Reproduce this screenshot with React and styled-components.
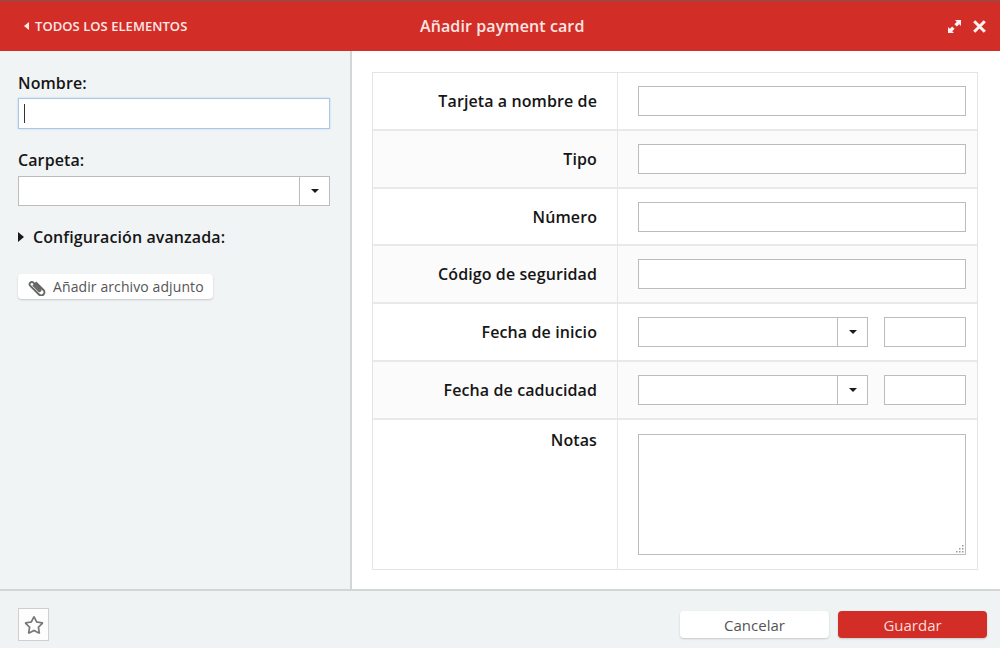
import React from 'react'
import styled, { createGlobalStyle } from 'styled-components'
import { FaRegStar } from 'react-icons/fa'

const Global = createGlobalStyle`
  html, body { margin: 0; padding: 0; height: 100%; }
  body { font-family: "Open Sans", "Liberation Sans", sans-serif; background: #fff; }
  * { box-sizing: border-box; }
`

const Page = styled.div`
  width: 1000px;
  height: 648px;
  display: flex;
  flex-direction: column;
  overflow: hidden;
`

const Header = styled.header`
  height: 51px;
  flex: none;
  display: grid;
  grid-template-columns: 396px auto 1fr;
  align-items: center;
  background: #d32d27;
  border-top: 2px solid #a8423c;
  color: #fff;
  padding: 0 14px 1px 24px;
`

const BackLink = styled.div`
  display: flex;
  align-items: center;
  gap: 6px;
  font-size: 13px;
  font-weight: 600;
  letter-spacing: 0.05px;
  color: #fde9e6;
`

const LeftCaret = styled.span`
  width: 0;
  height: 0;
  border-top: 4px solid transparent;
  border-bottom: 4px solid transparent;
  border-right: 5px solid #fde9e6;
`

const Title = styled.h1`
  margin: 0;
  font-size: 16px;
  font-weight: 600;
  letter-spacing: 0.1px;
  color: #fbe6e3;
`

const HeaderIcons = styled.div`
  display: flex;
  justify-content: flex-end;
  align-items: center;
  gap: 12px;
`

const Body = styled.div`
  flex: 1;
  display: flex;
  min-height: 0;
`

const Sidebar = styled.aside`
  width: 352px;
  flex: none;
  background: #f1f4f5;
  border-right: 2px solid #d3d6d7;
  padding: 21px 20px 0 18px;
`

const FieldLabel = styled.div`
  font-size: 16px;
  font-weight: 600;
  line-height: 22px;
  letter-spacing: 0.1px;
  color: #161616;
  margin-bottom: ${p => p.$gap}px;
`

const FocusedInput = styled.div`
  height: 31px;
  background: #fff;
  border: 1px solid #a9c8e8;
  box-shadow: 0 0 2px #bcd6f0;
  margin-bottom: 20px;
  padding: 5px 0 0 5px;
`

const Cursor = styled.div`
  width: 1px;
  height: 19px;
  background: #333;
`

const ComboBox = styled.div`
  display: flex;
  height: 30px;
  width: ${p => p.$width || '100%'};
  background: #fff;
  border: 1px solid #bcbcbc;
`

const ComboField = styled.div`
  flex: 1;
`

const ComboButton = styled.div`
  width: 30px;
  flex: none;
  display: flex;
  align-items: center;
  justify-content: center;
  border-left: 1px solid #bcbcbc;
`

const DownCaret = styled.span`
  width: 0;
  height: 0;
  border-left: 4px solid transparent;
  border-right: 4px solid transparent;
  border-top: 4px solid #1a1a1a;
`

const Advanced = styled.div`
  display: flex;
  align-items: center;
  gap: 9px;
  margin-top: 20px;
  font-size: 16px;
  font-weight: 600;
  line-height: 22px;
  letter-spacing: 0.1px;
  color: #161616;
`

const RightCaret = styled.span`
  width: 0;
  height: 0;
  border-top: 5px solid transparent;
  border-bottom: 5px solid transparent;
  border-left: 6px solid #1a1a1a;
`

const AttachButton = styled.button`
  display: flex;
  align-items: center;
  gap: 7px;
  height: 25px;
  margin-top: 26px;
  padding: 0 9px 0 10px;
  border: 0;
  border-radius: 4px;
  background: #fff;
  box-shadow: 0 1px 2px rgba(0, 0, 0, 0.18);
  font: 400 14px "Open Sans", sans-serif;
  letter-spacing: 0.1px;
  color: #555;
`

const Main = styled.main`
  flex: 1;
  background: #fff;
  padding: 21px 22px 0 20px;
`

const Table = styled.div`
  border: 1px solid #e4e4e4;
  height: 498px;
  display: flex;
  flex-direction: column;
`

const Row = styled.div`
  display: grid;
  grid-template-columns: 245px 1fr;
  height: ${p => p.$height}px;
  flex: ${p => (p.$grow ? 1 : 'none')};
  background: ${p => (p.$shaded ? '#fbfbfb' : '#fff')};

  & + & {
    border-top: 2px solid #e9e9e9;
  }
`

const RowLabel = styled.div`
  display: flex;
  justify-content: flex-end;
  align-items: ${p => (p.$top ? 'flex-start' : 'center')};
  padding: ${p => (p.$top ? '9px' : '0')} 20px 0 0;
  border-right: 1px solid #e6e6e6;
  font-size: 16px;
  font-weight: 600;
  letter-spacing: 0.1px;
  color: #161616;
`

const RowField = styled.div`
  display: flex;
  align-items: ${p => (p.$top ? 'flex-start' : 'center')};
  justify-content: space-between;
  padding: ${p => (p.$top ? '14px' : '0')} 11px 0 20px;
`

const TextInput = styled.div`
  height: 30px;
  width: ${p => p.$width || '100%'};
  background: #fff;
  border: 1px solid #bcbcbc;
`

const TextArea = styled.div`
  position: relative;
  width: 100%;
  height: 121px;
  background: #fff;
  border: 1px solid #bcbcbc;
`

const Grip = styled.svg`
  position: absolute;
  right: 1px;
  bottom: 1px;
`

const Footer = styled.footer`
  height: 59px;
  flex: none;
  display: flex;
  align-items: center;
  background: #f0f3f4;
  border-top: 2px solid #d3d6d7;
  padding: 10px 13px 0 18px;
`

const StarButton = styled.div`
  width: 31px;
  height: 33px;
  display: flex;
  align-items: center;
  justify-content: center;
  background: #fdfdfd;
  border: 1px solid #cfcfcf;
  color: #777;
  font-size: 20px;
`

const FooterButton = styled.button`
  width: 149px;
  height: 27px;
  margin-left: ${p => (p.$auto ? 'auto' : '9px')};
  border: 0;
  border-radius: 4px;
  font: 400 15px "Open Sans", sans-serif;
  background: ${p => (p.$primary ? '#d32d27' : '#fff')};
  color: ${p => (p.$primary ? '#fbdcd8' : '#555')};
  box-shadow: 0 1px 2px rgba(0, 0, 0, 0.18);
`

function ExpandIcon() {
  return (
    <svg width="13" height="13" viewBox="0 0 13 13" fill="#fdf1ef">
      <path d="M7 0h6v6l-1.8-1.8-2.4 2.4-2.4-2.4 2.4-2.4z" />
      <path d="M6 13H0V7l1.8 1.8 2.4-2.4 2.4 2.4-2.4 2.4z" />
    </svg>
  )
}

function CloseIcon() {
  return (
    <svg width="13" height="13" viewBox="0 0 13 13" stroke="#fdf1ef" strokeWidth="3" fill="none">
      <path d="M1.2 1.2l10.6 10.6M11.8 1.2L1.2 11.8" />
    </svg>
  )
}

// clip lies from top left to bottom right
function ClipIcon() {
  return (
    <svg width="18" height="18" viewBox="0 0 18 18" fill="none" stroke="#666" strokeWidth="1.9" strokeLinecap="round">
      <g transform="rotate(45 9 9)">
        <path d="M5.5 10.5V6.5h10.2a2.6 2.6 0 0 1 0 6.4H3.4a2.2 2.2 0 0 1 0-4.4h9.6a1 1 0 0 1 0 2H6" />
      </g>
    </svg>
  )
}

function Combo({ width }) {
  return (
    <ComboBox $width={width}>
      <ComboField />
      <ComboButton><DownCaret /></ComboButton>
    </ComboBox>
  )
}

const textRows = [
  { label: 'Tarjeta a nombre de', height: 56 },
  { label: 'Tipo', height: 58, shaded: true },
  { label: 'Número', height: 57 },
  { label: 'Código de seguridad', height: 58, shaded: true },
]

const dateRows = [
  { label: 'Fecha de inicio', height: 58 },
  { label: 'Fecha de caducidad', height: 58, shaded: true },
]

export default function App() {
  return (
    <Page>
      <Global />
      <Header>
        <BackLink><LeftCaret />TODOS LOS ELEMENTOS</BackLink>
        <Title>Añadir payment card</Title>
        <HeaderIcons><ExpandIcon /><CloseIcon /></HeaderIcons>
      </Header>
      <Body>
        <Sidebar>
          <FieldLabel $gap={4}>Nombre:</FieldLabel>
          <FocusedInput><Cursor /></FocusedInput>
          <FieldLabel $gap={5}>Carpeta:</FieldLabel>
          <Combo />
          <Advanced><RightCaret />Configuración avanzada:</Advanced>
          <AttachButton><ClipIcon />Añadir archivo adjunto</AttachButton>
        </Sidebar>
        <Main>
          <Table>
            {textRows.map(r => (
              <Row key={r.label} $height={r.height} $shaded={r.shaded}>
                <RowLabel>{r.label}</RowLabel>
                <RowField><TextInput /></RowField>
              </Row>
            ))}
            {dateRows.map(r => (
              <Row key={r.label} $height={r.height} $shaded={r.shaded}>
                <RowLabel>{r.label}</RowLabel>
                <RowField>
                  <Combo width="230px" />
                  <TextInput $width="82px" />
                </RowField>
              </Row>
            ))}
            <Row $grow>
              <RowLabel $top>Notas</RowLabel>
              <RowField $top>
                <TextArea>
                  <Grip width="9" height="9" viewBox="0 0 9 9" fill="#999">
                    <path d="M7 1h1.5v1.5H7zM4 4h1.5v1.5H4zM7 4h1.5v1.5H7zM1 7h1.5v1.5H1zM4 7h1.5v1.5H4zM7 7h1.5v1.5H7z" />
                  </Grip>
                </TextArea>
              </RowField>
            </Row>
          </Table>
        </Main>
      </Body>
      <Footer>
        <StarButton><FaRegStar /></StarButton>
        <FooterButton $auto>Cancelar</FooterButton>
        <FooterButton $primary>Guardar</FooterButton>
      </Footer>
    </Page>
  )
}
